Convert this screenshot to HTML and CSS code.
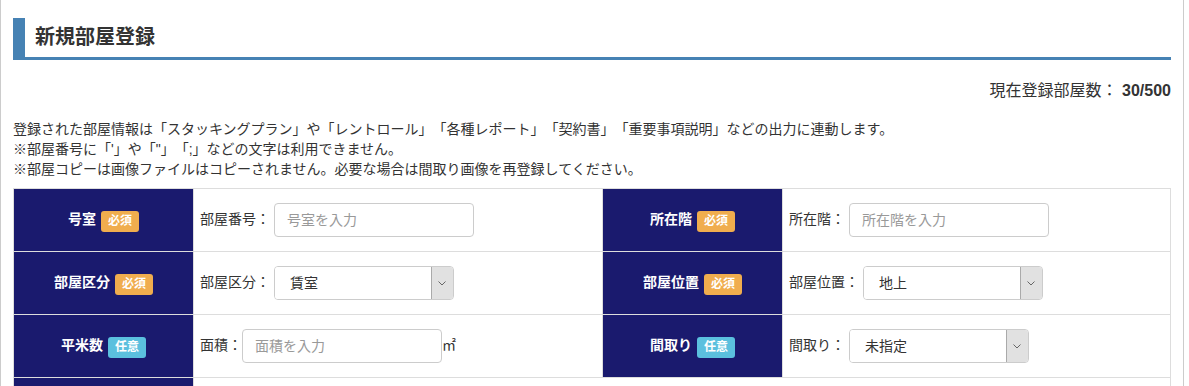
FILE: index.html
```html
<!DOCTYPE html>
<html lang="ja">
<head>
	<meta http-equiv="Content-Type" content="text/html; charset=UTF-8">
	<meta name="viewport" content="width=device-width, initial-scale=1">
	<title>新規部屋登録</title>
	<link rel="stylesheet" href="styles.css">
</head>
<body>
<main class="panel">
	<h2 class="page-title">新規部屋登録</h2>
	<p class="room-count">現在登録部屋数： <b>30/500</b></p>
	<p class="notice">
		登録された部屋情報は「スタッキングプラン」や「レントロール」「各種レポート」「契約書」「重要事項説明」などの出力に連動します。<br>
		※部屋番号に「'」や「"」「;」などの文字は利用できません。<br>
		※部屋コピーは画像ファイルはコピーされません。必要な場合は間取り画像を再登録してください。
	</p>

	<table class="room-form">
		<colgroup>
			<col class="col-th">
			<col class="col-td-left">
			<col class="col-th">
			<col>
		</colgroup>
		<tr>
			<th>号室 <span class="badge badge-required">必須</span></th>
			<td>部屋番号： <input type="text" class="form-input" placeholder="号室を入力"></td>
			<th>所在階 <span class="badge badge-required">必須</span></th>
			<td>所在階： <input type="text" class="form-input" placeholder="所在階を入力"></td>
		</tr>
		<tr>
			<th>部屋区分 <span class="badge badge-required">必須</span></th>
			<td>部屋区分：
				<span class="form-select">
					<select>
						<option>賃室</option>
						<option>住宅</option>
						<option>駐車場</option>
					</select>
					<span class="select-arrow"><svg width="8" height="5" viewBox="0 0 8 5"><path d="M0.5 0.5 L4 4 L7.5 0.5" fill="none" stroke="#666" stroke-width="1"/></svg></span>
				</span>
			</td>
			<th>部屋位置 <span class="badge badge-required">必須</span></th>
			<td>部屋位置：
				<span class="form-select">
					<select>
						<option>地上</option>
						<option>地下</option>
					</select>
					<span class="select-arrow"><svg width="8" height="5" viewBox="0 0 8 5"><path d="M0.5 0.5 L4 4 L7.5 0.5" fill="none" stroke="#666" stroke-width="1"/></svg></span>
				</span>
			</td>
		</tr>
		<tr>
			<th>平米数 <span class="badge badge-optional">任意</span></th>
			<td>面積：<input type="text" class="form-input" placeholder="面積を入力">㎡</td>
			<th>間取り <span class="badge badge-optional">任意</span></th>
			<td>間取り：
				<span class="form-select">
					<select>
						<option>未指定</option>
						<option>1R</option>
						<option>1K</option>
						<option>1LDK</option>
					</select>
					<span class="select-arrow"><svg width="8" height="5" viewBox="0 0 8 5"><path d="M0.5 0.5 L4 4 L7.5 0.5" fill="none" stroke="#666" stroke-width="1"/></svg></span>
				</span>
			</td>
		</tr>
		<tr>
			<th>備考 <span class="badge badge-optional">任意</span></th>
			<td colspan="3"><textarea class="form-textarea" placeholder="備考を入力"></textarea></td>
		</tr>
	</table>
</main>
</body>
</html>
```

FILE: styles.css
```css
html,
body {
	height: 100%;
}
body {
	margin: 0;
	overflow: hidden;
	font-family: "Liberation Sans", "Noto Sans CJK JP", sans-serif;
	font-size: 14px;
	line-height: 20px;
	color: #333;
	background: #fff;
	text-spacing-trim: space-all;
}
.panel {
	box-sizing: border-box;
	width: 1184px;
	min-height: 100%;
	padding: 18px 12px 0;
	border-left: 1px solid #ccc;
	border-right: 1px solid #ccc;
}
.page-title {
	margin: 0;
	height: 39px;
	line-height: 39px;
	padding-left: 10px;
	border-left: 12px solid #4682b4;
	border-bottom: 3px solid #4682b4;
	font-size: 20px;
	font-weight: bold;
	color: #333;
}
.room-count {
	margin: 20px 0 0;
	line-height: 22px;
	font-size: 16px;
	text-align: right;
}
.notice {
	margin: 17px 0 9px;
}
.room-form {
	width: 100%;
	table-layout: fixed;
	border-collapse: collapse;
	border: 1px solid #ddd;
}
.room-form .col-th {
	width: 180px;
}
.room-form .col-td-left {
	width: 409px;
}
.room-form th,
.room-form td {
	height: 34px;
	padding: 14px 6px;
	border: 1px solid #ddd;
	vertical-align: middle;
	white-space: nowrap;
}
.room-form th {
	background: #1a1a6e;
	color: #fff;
	font-weight: bold;
	text-align: center;
}
.room-form td {
	text-align: left;
}
.badge {
	display: inline-block;
	margin-left: 1px;
	padding: 3px 7px;
	line-height: 15px;
	font-size: 12px;
	font-weight: bold;
	color: #fff;
	border-radius: 3px;
	vertical-align: -1px;
}
.badge-required {
	background: #f0ad4e;
}
.badge-optional {
	background: #5bc0de;
}
.form-input {
	box-sizing: border-box;
	width: 200px;
	height: 34px;
	padding: 6px 12px;
	border: 1px solid #ccc;
	border-radius: 4px;
	font: inherit;
	color: #333;
	vertical-align: middle;
}
.form-input::placeholder,
.form-textarea::placeholder {
	color: #999;
}
.form-textarea {
	box-sizing: border-box;
	display: block;
	width: 600px;
	height: 100px;
	padding: 6px 12px;
	border: 1px solid #ccc;
	border-radius: 4px;
	font: inherit;
	color: #333;
	resize: none;
}
.form-select {
	box-sizing: border-box;
	display: inline-flex;
	width: 180px;
	height: 34px;
	border: 1px solid #ccc;
	border-radius: 4px;
	overflow: hidden;
	vertical-align: middle;
	background: #fff;
}
.form-select select {
	flex: 1;
	min-width: 0;
	padding: 0 0 0 15px;
	border: 0;
	background: #fff;
	font: inherit;
	color: #333;
	-webkit-appearance: none;
	appearance: none;
	outline: none;
}
.select-arrow {
	display: flex;
	align-items: center;
	justify-content: center;
	width: 21px;
	background: #e1e1e1;
	border-left: 1px solid #aaa;
}
```
